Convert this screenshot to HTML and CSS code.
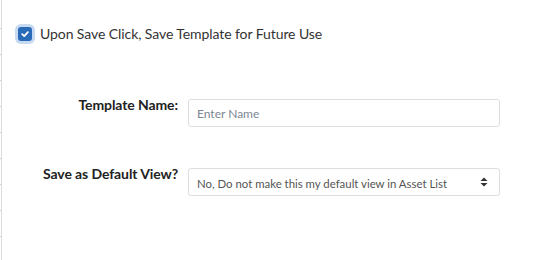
FILE: index.html
```html
<!DOCTYPE html>
<html>
<head>
<meta charset="utf-8">
<link rel="stylesheet" href="styles.css">
</head>
<body>
<div class="page">
  <div class="rail"></div>
  <div class="content">
    <label class="check-row">
      <span class="cb">
        <svg width="10" height="10" viewBox="0 0 10 10"><path d="M2.2 5.2 L4.2 7.1 L7.9 3.2" fill="none" stroke="#fff" stroke-width="1.8" stroke-linecap="round" stroke-linejoin="round"/></svg>
      </span>
      <span class="check-text">Upon Save Click, Save Template for Future Use</span>
    </label>
    <div class="form">
      <div class="label">Template Name:</div>
      <div class="field"><span class="placeholder">Enter Name</span></div>
      <div class="label label-2">Save as Default View?</div>
      <div class="field field-2">
        <span class="value">No, Do not make this my default view in Asset List</span>
        <svg class="sort" width="8" height="10" viewBox="0 0 8 10"><path d="M0.5 4 L4 0.5 L7.5 4 Z" fill="#333"/><path d="M0.5 6 L4 9.5 L7.5 6 Z" fill="#333"/></svg>
      </div>
    </div>
  </div>
</div>
</body>
</html>
```

FILE: styles.css
```css
html, body {
  margin: 0;
  padding: 0;
  background: #fff;
}
body {
  font-family: Lato, "Open Sans", sans-serif;
  color: #333;
}
.page {
  display: flex;
  height: 260px;
  width: 547px;
}
.rail {
  width: 1px;
  margin-left: 1px;
  background: #dcdcdc;
  position: relative;
}
.rail::before {
  content: "";
  position: absolute;
  left: -1px;
  top: 3px;
  width: 1px;
  height: 257px;
  background: repeating-linear-gradient(to bottom, transparent 0, transparent 25px, #cfcfcf 25px, #cfcfcf 26px);
}
.content {
  flex: 1;
  padding-left: 16px;
}
.check-row {
  display: flex;
  align-items: center;
  margin-top: 26px;
  height: 16px;
}
.cb {
  width: 14px;
  height: 14px;
  border-radius: 3px;
  background: #2a6bb8;
  box-shadow: 0 0 0 3px #c7daf1;
  display: flex;
  align-items: center;
  justify-content: center;
  flex: none;
}
.check-text {
  margin-left: 8px;
  font-size: 14px;
  line-height: 16px;
  color: #333;
  letter-spacing: -0.08px;
}
.form {
  display: grid;
  grid-template-columns: 176px 312px;
  column-gap: 10px;
  row-gap: 41px;
  margin-top: 57px;
  margin-left: -16px;
}
.label {
  text-align: right;
  font-weight: bold;
  font-size: 14px;
  line-height: 17px;
  color: #222;
  margin-top: -3px;
  letter-spacing: -0.1px;
}
.field {
  height: 26px;
  border: 1px solid #dedede;
  border-radius: 3px;
  display: flex;
  align-items: center;
  padding: 0 0 0 8px;
  font-size: 12px;
}
.placeholder {
  color: #7b8794;
  padding-top: 1px;
}
.value {
  color: #555;
  flex: 1;
  padding-top: 2px;
  font-size: 11.4px;
}
.sort {
  margin-right: 11px;
}
```
